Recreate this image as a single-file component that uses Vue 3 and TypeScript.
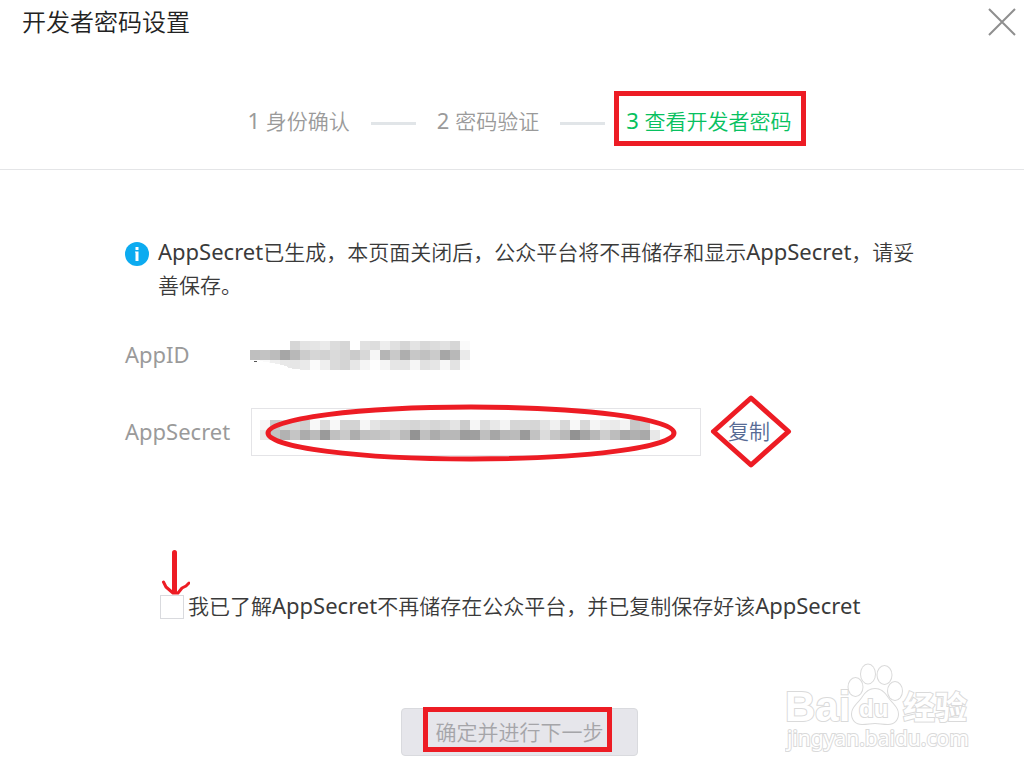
<script setup lang="ts">
import { ref } from 'vue'

interface Cell {
  x: number
  y: number
  fill: string
}

const understood = ref(false)

/** Turns a list of two-digit grey levels into a row of 10px blocks. */
function greyRow(x: number, y: number, levels: string): Cell[] {
  return levels.split(' ').map((level, i) => ({
    x: x + i * 10,
    y,
    fill: `#${level}${level}${level}`,
  }))
}

const idCells: Cell[] = [
  ...greyRow(40, 1, 'd6 e3 e5 ea dc d6 ff e1 dd ed e0 d5 e3 d8 dc e1 d6 fa'),
  ...greyRow(0, 10, 'bf c3 bc a6 b8 cc d6 d2 da d5 cb d8 f6 b5 c9 ae c7 c1 cb a6 b8 ea'),
  ...greyRow(10, 20, 'fa ef e8 e6 ea fb ef da d4 e7 f5 fe f5 e6 e5 f6 e1 e6 f7 e3 fd'),
]

const secretCells: Cell[] = [
  ...greyRow(
    9,
    12,
    'f7 c8 d9 d8 cf f8 dc f8 d3 d3 f6 e4 dc dc d9 d5 dc d6 da e4 cb f6 dc e8 f4 d6 d8 d6 e3 f0 d8 f8 d8 f5 ed ea f3 c6 cf',
  ),
  ...greyRow(
    9,
    22,
    'e8 c2 b2 c5 ac bb 9a c0 ca ad c1 c3 c6 cf bb 93 c0 ac b8 b8 9d 9f bf a6 b8 bb 9a c2 dc c6 b9 92 a5 b8 ce bd a9 b0 a9 e8',
  ),
]
</script>

<template>
  <div class="dialog">
    <header class="head">
      <div class="title-bar">
        <h1 class="title">开发者密码设置</h1>
        <button class="close" type="button" aria-label="关闭">
          <svg width="28" height="28" viewBox="0 0 28 28" aria-hidden="true">
            <path d="M1 1 27 27M27 1 1 27" fill="none" stroke="#8f8f8f" stroke-width="2" />
          </svg>
        </button>
      </div>
      <ol class="steps">
        <li class="step"><span class="latin">1 </span>身份确认</li>
        <li class="dash" aria-hidden="true"></li>
        <li class="step"><span class="latin">2 </span>密码验证</li>
        <li class="dash" aria-hidden="true"></li>
        <li class="step current"><span class="latin">3 </span>查看开发者密码<span class="mark step-mark"></span></li>
      </ol>
    </header>

    <main class="content">
      <div class="notice">
        <svg class="info" width="24" height="24" viewBox="0 0 24 24" aria-hidden="true">
          <circle cx="12" cy="12" r="12" fill="#0cabf0" />
          <path d="M10.500 5h3v3h-3zM10 9.500h3.500V19h-3v-8.500H10z" fill="#fff" />
        </svg>
        <p class="notice-text">
          <span class="latin">AppSecret</span>已生成，本页面关闭后，公众平台将不再储存和显示<span class="latin">AppSecret</span>，请妥善保存。
        </p>
      </div>

      <div class="row id-row">
        <span class="label">AppID</span>
        <svg class="id-value" width="220" height="30" viewBox="0 0 220 30" shape-rendering="crispEdges" role="img" aria-label="AppID">
          <rect v-for="(c, i) in idCells" :key="i" :x="c.x" :y="c.y" width="10" height="10" :fill="c.fill" />
          <path d="M0 20h10v1l6 1 12 2 8 2 2 2 7 1 10 1H0z" fill="#fff" />
          <path d="M4 21h3v1H4z" fill="#555" />
        </svg>
      </div>

      <div class="row">
        <label class="label" for="secret">AppSecret</label>
        <div class="field">
          <input id="secret" class="secret" type="text" readonly />
          <svg class="field-art" width="450" height="48" viewBox="0 0 450 48" aria-hidden="true">
            <g shape-rendering="crispEdges">
              <rect v-for="(c, i) in secretCells" :key="i" :x="c.x" :y="c.y" width="10" height="10" :fill="c.fill" />
            </g>
            <ellipse cx="220" cy="25" rx="203" ry="26" fill="none" stroke="#ed1c24" stroke-width="5" />
          </svg>
        </div>
        <a class="copy" href="#copy">复制
          <svg class="diamond" width="82" height="74" viewBox="0 0 82 74" aria-hidden="true">
            <path d="M41 4 78.500 37.500 41 71 3.500 37.500z" fill="none" stroke="#ed1c24" stroke-width="5" stroke-linejoin="round" />
          </svg>
        </a>
      </div>

      <div class="agree">
        <span class="tick-wrap">
          <input id="agree" v-model="understood" class="tick" type="checkbox" />
          <svg class="arrow" width="30" height="46" viewBox="0 0 30 46" aria-hidden="true">
            <path d="M14.500 3.500V42" fill="none" stroke="#ed1c24" stroke-width="5" stroke-linecap="round" />
            <path d="M3.500 33 6 38 13 44 18 44 22 39 26 37 29 34" fill="none" stroke="#ed1c24" stroke-width="3" stroke-linecap="round" stroke-linejoin="round" />
          </svg>
        </span>
        <label class="agree-text" for="agree">我已了解<span class="latin">AppSecret</span>不再储存在公众平台，并已复制保存好该<span class="latin">AppSecret</span></label>
      </div>

      <button class="next" type="button" disabled>
        <span class="next-text">确定并进行下一步<span class="mark next-mark"></span></span>
      </button>
    </main>

    <svg class="watermark" width="190" height="96" viewBox="0 0 190 96" aria-hidden="true">
      <g class="wm-ink">
        <text class="wm-logo" x="0" y="60">Bai</text>
        <path d="M90 28c6 0 10 4 13 9 4 6 10 9 10 16 0 6-4 10-10 10-5 0-9-1-13-1s-8 1-13 1c-6 0-10-4-10-10 0-7 6-10 10-16 3-5 7-9 13-9z" />
        <ellipse cx="70.500" cy="26" rx="7" ry="9" />
        <ellipse cx="83" cy="13" rx="7" ry="9.500" />
        <ellipse cx="99.500" cy="14" rx="7" ry="9" />
        <ellipse cx="110" cy="30" rx="7" ry="9" />
        <text class="wm-du" x="74" y="56">du</text>
        <text class="wm-cjk" x="118" y="58">经验</text>
        <text class="wm-url" x="2" y="85">jingyan.baidu.com</text>
      </g>
    </svg>
  </div>
</template>

<style>
body {
  background: #fff;
}
</style>

<style scoped>
.dialog {
  position: relative;
  overflow: hidden;
  padding-bottom: 18px;
  color: #3a3a3a;
  font-family: "Noto Sans", "Noto Sans CJK SC", sans-serif;
  font-size: 21px;
  font-weight: 350;
  line-height: 32px;
}

.head {
  padding-bottom: 32px;
  border-bottom: 1px solid #e4e5e7;
}

.title-bar {
  display: flex;
  align-items: center;
  justify-content: space-between;
  height: 44px;
  padding: 0 8px 0 22px;
}

.title {
  margin: 0;
  color: #222;
  font-size: 24px;
  font-weight: 350;
}

.close {
  display: flex;
  padding: 0;
  border: 0;
  background: none;
}

.steps {
  display: flex;
  align-items: center;
  justify-content: center;
  gap: 21px;
  margin: 61px 0 0;
  padding: 0 110px 0 125px;
  color: #9a9a9a;
  list-style: none;
}

.step {
  position: relative;
  white-space: nowrap;
}

.current {
  color: #07c160;
}

.dash {
  width: 45px;
  height: 3px;
  margin-top: 5px;
  background: #e1e5e8;
}

.mark {
  position: absolute;
  border: 5px solid #ed1c24;
}

.step-mark {
  inset: -14px -15px -9px -12px;
}

.content {
  display: flex;
  flex-direction: column;
  padding: 66px 110px 0 125px;
}

.notice {
  display: flex;
  gap: 9px;
  margin-right: -10px;
  line-height: 33px;
}

.info {
  flex: none;
  margin-top: 6px;
}

.notice-text {
  margin: 0;
}

.latin {
  font-size: 22px;
  font-weight: 400;
  line-height: 1;
}

.row {
  display: flex;
  align-items: center;
  height: 48px;
}

.id-row {
  margin: 29px 0;
}

.label {
  width: 126px;
  padding-bottom: 2px;
  color: #9a9a9a;
  font-size: 22px;
  font-weight: 400;
}

.id-value {
  margin-left: -1px;
}

.field {
  position: relative;
  width: 450px;
  height: 48px;
}

.secret {
  box-sizing: border-box;
  width: 100%;
  height: 100%;
  padding: 0 12px;
  border: 1px solid #e4e4e7;
  background: #fff;
}

.field-art {
  position: absolute;
  top: 0;
  left: 0;
  overflow: visible;
}

.copy {
  position: relative;
  margin-left: 27px;
  padding-bottom: 2px;
  color: #576b95;
  text-decoration: none;
}

.diamond {
  position: absolute;
  top: -21px;
  left: -18px;
}

.agree {
  display: flex;
  align-items: center;
  gap: 4px;
  margin: 134px 0 0 35px;
}

.agree-text {
  padding-bottom: 2px;
}

.tick-wrap {
  position: relative;
  display: flex;
}

.tick {
  width: 24px;
  height: 24px;
  margin: 0;
  border: 1px solid #d9dade;
  appearance: none;
  background: #fff;
}

.tick:checked {
  background: #07c160;
}

.arrow {
  position: absolute;
  top: -46px;
  left: 0;
}

.next {
  align-self: center;
  width: 237px;
  height: 48px;
  margin-top: 84px;
  padding: 0;
  border: 1px solid #d9dade;
  border-radius: 4px;
  background: #e6e6eb;
  color: #a5a5a9;
  font: inherit;
}

.next-text {
  position: relative;
  display: inline-block;
}

.next-mark {
  inset: -9px -8px -4px -13px;
}

.watermark {
  position: absolute;
  right: 49px;
  bottom: 17px;
}

.wm-ink {
  fill: #fff;
  stroke: #dadada;
  stroke-width: 2px;
  paint-order: stroke;
}

.wm-logo {
  font: bold 42px "Liberation Sans", sans-serif;
}

.wm-du {
  font: bold 24px "Liberation Sans", sans-serif;
}

.wm-cjk {
  font: bold 32px "Noto Sans CJK SC", sans-serif;
}

.wm-url {
  font: 21px "Noto Sans", sans-serif;
}
</style>
